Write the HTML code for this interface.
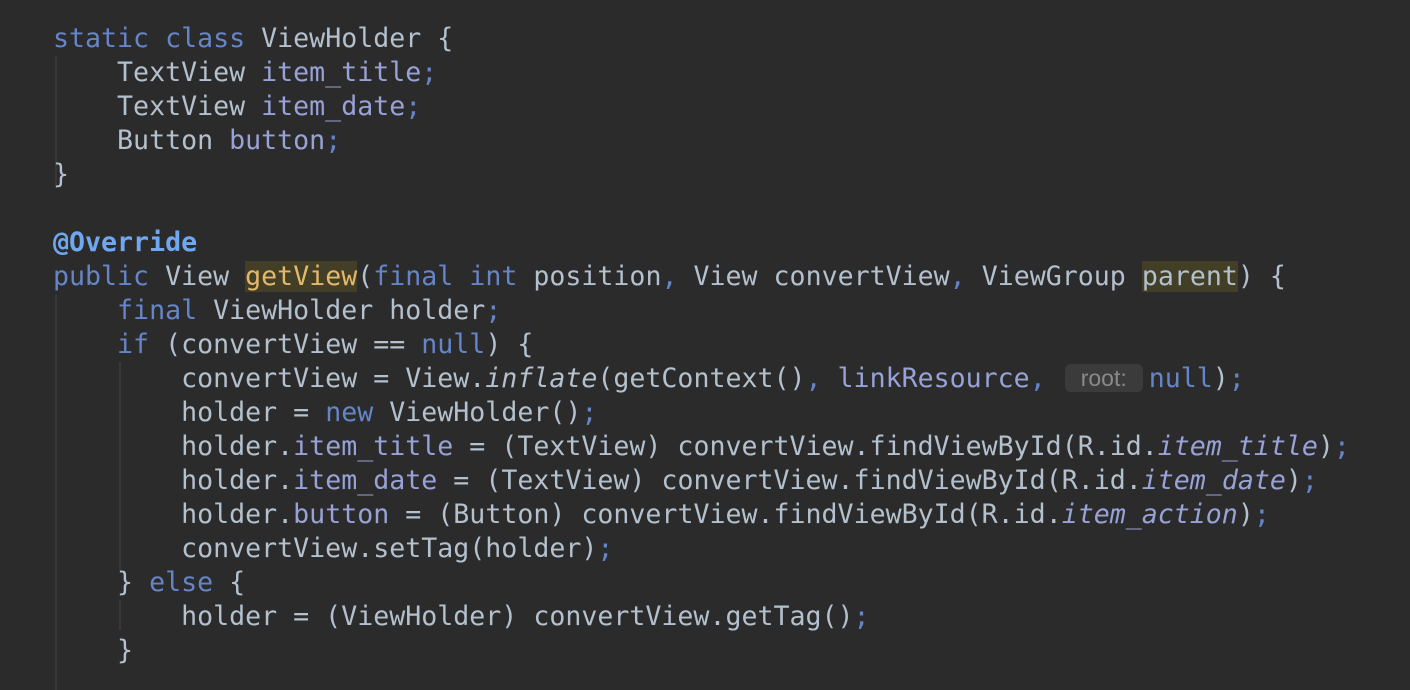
<!DOCTYPE html>
<html><head><meta charset="utf-8"><style>
html,body{margin:0;padding:0;background:#2b2b2b;width:1410px;height:690px;overflow:hidden}
.code{position:absolute;left:53px;top:22px;font-family:"DejaVu Sans Mono","Liberation Mono",monospace;font-size:26.6px;line-height:34px;color:#b3c0cd;white-space:pre}
.k{color:#6585c8}
.f{color:#98a2d6}
.p{color:#6585c8}
.a{color:#6fa8f0;font-weight:bold}
.m{color:#e4b86a;background:#423f26}
.hl{background:#423f26}
i{font-style:italic}
.hint{display:inline-block;width:78px;height:28px;line-height:28px;vertical-align:1px;margin:0 6px 0 3px;background:#3b3b3b;border-radius:6px;color:#8a8a8a;font-family:"Liberation Sans",sans-serif;font-size:23px;text-align:center}
.g{position:absolute;width:2px;background:#383838}
</style></head><body>
<div class="g" style="left:55px;top:56px;height:130px"></div>
<div class="g" style="left:55px;top:294px;height:396px"></div>
<div class="g" style="left:119px;top:362px;height:208px"></div>
<div class="g" style="left:119px;top:600px;height:30px"></div>
<div class="code"><span class="k">static class</span> ViewHolder {
    TextView <span class="f">item_title</span><span class="p">;</span>
    TextView <span class="f">item_date</span><span class="p">;</span>
    Button <span class="f">button</span><span class="p">;</span>
}

<span class="a">@Override</span>
<span class="k">public</span> View <span class="m">getView</span>(<span class="k">final int</span> position<span class="p">,</span> View convertView<span class="p">,</span> ViewGroup <span class="hl">parent</span>) {
    <span class="k">final</span> ViewHolder holder<span class="p">;</span>
    <span class="k">if</span> (convertView == <span class="k">null</span>) {
        convertView = View.<i>inflate</i>(getContext()<span class="p">,</span> <span class="f">linkResource</span><span class="p">,</span> <span class="hint">root:</span><span class="k">null</span>)<span class="p">;</span>
        holder = <span class="k">new</span> ViewHolder()<span class="p">;</span>
        holder.<span class="f">item_title</span> = (TextView) convertView.findViewById(R.id.<i class="f">item_title</i>)<span class="p">;</span>
        holder.<span class="f">item_date</span> = (TextView) convertView.findViewById(R.id.<i class="f">item_date</i>)<span class="p">;</span>
        holder.<span class="f">button</span> = (Button) convertView.findViewById(R.id.<i class="f">item_action</i>)<span class="p">;</span>
        convertView.setTag(holder)<span class="p">;</span>
    } <span class="k">else</span> {
        holder = (ViewHolder) convertView.getTag()<span class="p">;</span>
    }</div>
</body></html>
